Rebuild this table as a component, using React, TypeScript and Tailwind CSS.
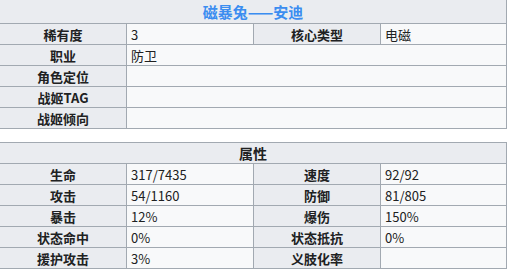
import React from "react";

const font = { fontFamily: '"Noto Sans CJK SC", "Noto Sans", sans-serif' };

function Label({ children, span = 1 }: { children?: React.ReactNode; span?: number }) {
  return (
    <div
      className={`h-[21px] border-r border-b border-[#a2a9b1] bg-[#eaecf0] flex items-center justify-center font-bold text-[13px] text-[#202122] ${span === 2 ? "col-span-2" : ""}`}
    >
      {children}
    </div>
  );
}

function Value({ children, span = 1 }: { children?: React.ReactNode; span?: number }) {
  return (
    <div
      className={`h-[21px] border-r border-b border-[#a2a9b1] bg-[#f8f9fa] flex items-center pl-[4px] text-[13px] text-[#202122] ${span === 3 ? "col-span-3" : ""}`}
    >
      {children}
    </div>
  );
}

export default function App() {
  const info: [string, string][] = [
    ["职业", "防卫"],
    ["角色定位", ""],
    ["战姬TAG", ""],
    ["战姬倾向", ""],
  ];
  const stats: [string, string, string, string][] = [
    ["生命", "317/7435", "速度", "92/92"],
    ["攻击", "54/1160", "防御", "81/805"],
    ["暴击", "12%", "爆伤", "150%"],
    ["状态命中", "0%", "状态抵抗", "0%"],
    ["援护攻击", "3%", "义肢化率", ""],
  ];
  return (
    <div className="w-[507px] h-[269px] bg-white overflow-hidden leading-none" style={font}>
      <div className="ml-[-1px] w-[508px] grid grid-cols-[127px_127px_127px_126px] border-l border-[#a2a9b1]">
        <div className="col-span-4 h-[24px] border-r border-b border-[#a2a9b1] bg-[#eaecf0] flex items-center justify-center font-bold text-[15px] text-[#3b8df0]">
          磁暴兔——安迪
        </div>
        <Label>稀有度</Label>
        <Value>3</Value>
        <Label>核心类型</Label>
        <Value>电磁</Value>
        {info.map(([k, v]) => (
          <React.Fragment key={k}>
            <Label>{k}</Label>
            <Value span={3}>{v}</Value>
          </React.Fragment>
        ))}
      </div>
      <div className="h-[13px]" />
      <div className="ml-[-1px] w-[508px] grid grid-cols-[127px_127px_127px_126px] border-l border-t border-[#a2a9b1]">
        <div className="col-span-4 h-[21px] border-r border-b border-[#a2a9b1] bg-[#eaecf0] flex items-center justify-center font-bold text-[14px] text-[#202122]">
          属性
        </div>
        {stats.map(([a, b, c, d]) => (
          <React.Fragment key={a}>
            <Label>{a}</Label>
            <Value>{b}</Value>
            <Label>{c}</Label>
            <Value>{d}</Value>
          </React.Fragment>
        ))}
      </div>
    </div>
  );
}
